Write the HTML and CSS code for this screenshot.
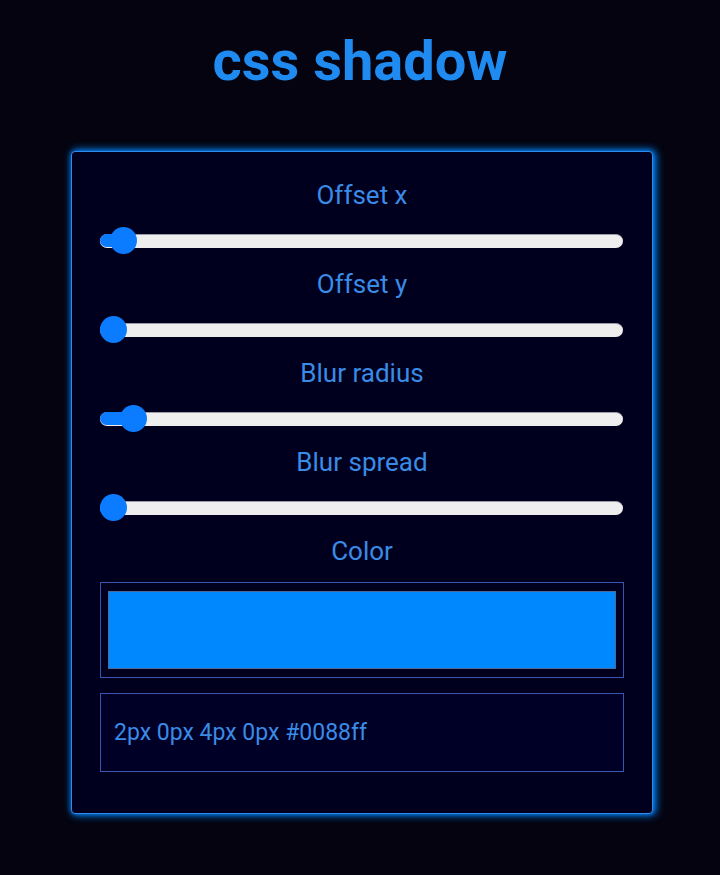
FILE: index.html
```html
<!DOCTYPE html>
<html lang="en">
<head>
<meta charset="utf-8">
<title>css shadow</title>
<link rel="stylesheet" href="styles.css">
</head>
<body>
<h1 class="title">css shadow</h1>
<div class="card">
  <div class="group">
    <div class="label">Offset x</div>
    <div class="slider" style="--v:0.02"><div class="track"></div><div class="fill"></div><div class="thumb"></div></div>
  </div>
  <div class="group">
    <div class="label">Offset y</div>
    <div class="slider" style="--v:0"><div class="track"></div><div class="fill"></div><div class="thumb"></div></div>
  </div>
  <div class="group">
    <div class="label">Blur radius</div>
    <div class="slider" style="--v:0.04"><div class="track"></div><div class="fill"></div><div class="thumb"></div></div>
  </div>
  <div class="group">
    <div class="label">Blur spread</div>
    <div class="slider" style="--v:0"><div class="track"></div><div class="fill"></div><div class="thumb"></div></div>
  </div>
  <div class="label">Color</div>
  <div class="color-box"><div class="swatch"></div></div>
  <div class="output">2px 0px 4px 0px #0088ff</div>
</div>
</body>
</html>
```
FILE: styles.css
```css
html, body {
  margin: 0;
  padding: 0;
  background: #04030f;
}
body {
  font-family: Roboto, "Liberation Sans", sans-serif;
  min-height: 875px;
}
.title {
  margin: 0;
  padding-top: 24px;
  height: 75px;
  text-align: center;
  font-size: 56px;
  line-height: 75px;
  font-weight: 700;
  color: #1f8bf0;
}
.card {
  box-sizing: border-box;
  width: 582px;
  margin: 52px 0 0 71px;
  height: 663px;
  padding: 28px 28px 0 28px;
  background: #00001e;
  border: 1px solid #338aee;
  border-radius: 4px;
  box-shadow: 2px 0 8px 1px #0088ff, 0 0 4px 0 rgba(0, 136, 255, 0.7);
  display: flex;
  flex-direction: column;
}
.group {
  display: flex;
  flex-direction: column;
  gap: 17px;
  margin-bottom: 15px;
}
.label {
  height: 30px;
  line-height: 30px;
  font-size: 26px;
  text-align: center;
  color: #3a8be6;
}
.slider {
  position: relative;
  height: 27px;
  display: flex;
  align-items: center;
  margin-right: 1px;
}
.track {
  flex: 1;
  box-sizing: border-box;
  height: 14px;
  background: #eeeeef;
  border-radius: 7px;
  border-top: 1px solid #9a9aa6;
}
.fill {
  position: absolute;
  left: 0;
  top: 7px;
  height: 13px;
  width: calc(13.5px + (100% - 27px) * var(--v));
  background: #0b7bff;
  border-radius: 7px;
}
.thumb {
  position: absolute;
  top: 0;
  left: calc((100% - 27px) * var(--v));
  width: 27px;
  height: 27px;
  border-radius: 50%;
  background: #0b7bff;
}
.color-box {
  margin-top: 16px;
  height: 96px;
  box-sizing: border-box;
  border: 1px solid #3a54b4;
  padding: 8px 7px;
  background: #00001e;
}
.swatch {
  box-sizing: border-box;
  height: 100%;
  background: #0088ff;
  border: 1px solid #4a6a9a;
}
.output {
  margin-top: 15px;
  height: 79px;
  box-sizing: border-box;
  border: 1px solid #3a54b4;
  background: #000026;
  padding-left: 13px;
  display: flex;
  align-items: center;
  font-size: 23px;
  color: #3a8be6;
}
```
